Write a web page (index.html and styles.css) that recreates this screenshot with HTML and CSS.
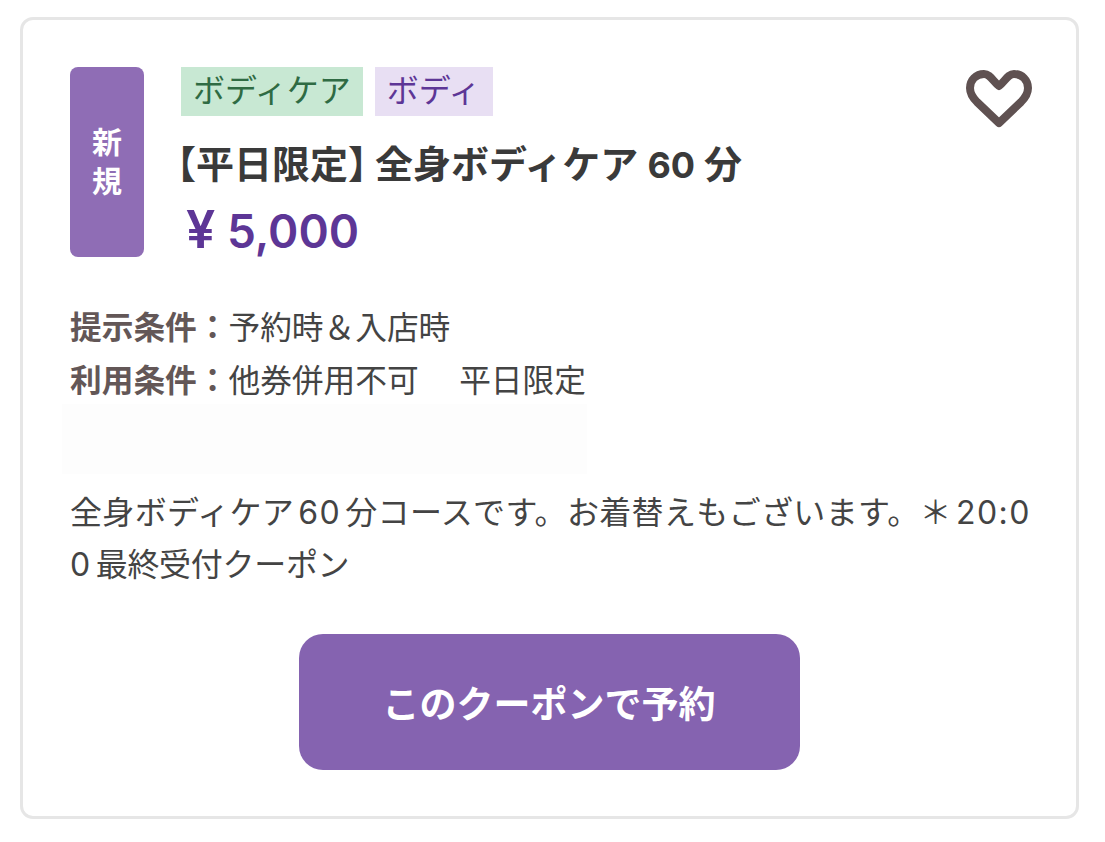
FILE: index.html
```html
<!DOCTYPE html>
<html lang="ja">
<head>
<meta charset="utf-8">
<title>クーポン</title>
<link rel="stylesheet" href="styles.css">
</head>
<body>
<article class="card">
  <header class="head">
    <div class="badge">新<br>規</div>
    <div class="summary">
      <div class="tags">
        <span class="tag tag-green">ボディケア</span>
        <span class="tag tag-purple">ボディ</span>
      </div>
      <h2 class="title">【平日限定<span class="close">】</span>全身ボディケア <span class="title-num">60</span> 分</h2>
      <p class="price"><span class="yen">¥</span> 5,000</p>
    </div>
    <svg class="heart" viewBox="0 0 66 58" aria-label="お気に入り">
      <path d="M33 53 L11 32 C6 27 4 23 4 18 C4 10 10 4 18 4 C24 4 27 11 33 16 C39 11 42 4 48 4 C56 4 62 10 62 18 C62 23 60 27 55 32 Z"/>
    </svg>
  </header>
  <dl class="terms">
    <div class="term"><dt>提示条件：</dt><dd>予約時＆入店時</dd></div>
    <div class="term"><dt>利用条件：</dt><dd>他券併用不可　 平日限定</dd></div>
  </dl>
  <div class="blank"></div>
  <p class="desc">全身ボディケア<span class="num">60</span>分コースです。お着替えもございます。＊<span class="num">20:00</span>最終受付クーポン</p>
  <div class="actions"><a class="button">このクーポンで予約</a></div>
</article>
</body>
</html>
```
FILE: styles.css
```css
* { box-sizing: border-box; }
html, body { margin: 0; padding: 0; background: #fff; }
body {
  width: 1105px;
  height: 842px;
  overflow: hidden;
  padding: 17px 26px 23px 20px;
  font-family: Inter, "Noto Sans CJK JP", sans-serif;
  color: #3d3a3a;
}
.card {
  height: 802px;
  border: 3px solid #e6e6e6;
  border-radius: 13px;
  padding: 47px 44px 0 47px;
  background: #fff;
}
.head { display: flex; align-items: flex-start; }
.badge {
  flex: none;
  width: 74px;
  height: 190px;
  border-radius: 8px;
  background: #8f6db5;
  color: #fff;
  font-size: 30px;
  font-weight: 700;
  line-height: 39px;
  display: flex;
  align-items: center;
  justify-content: center;
  text-align: center;
}
.summary { flex: 1; margin-left: 37px; }
.tags { display: flex; gap: 12px; }
.tag {
  height: 49px;
  padding: 0 12px;
  font-size: 32px;
  line-height: 47px;
}
.tag-green { background: #c8e8d3; color: #2f6b43; }
.tag-purple { background: #e8dff3; color: #5d3696; }
.title {
  margin: 22px 0 0 -23px;
  font-size: 38px;
  line-height: 52px;
  font-weight: 700;
  color: #3a3a3a;
  white-space: nowrap;
}
.close { margin-right: -11px; }
.title-num { font-size: 36px; }
.price {
  margin: 13px 0 0 5px;
  font-size: 46px;
  line-height: 52px;
  font-weight: 600;
  color: #5d3696;
}
.yen { font-size: 52px; line-height: 52px; }
.heart {
  flex: none;
  width: 66px;
  height: 58px;
  margin-top: 3px;
  fill: none;
  stroke: #5f5151;
  stroke-width: 8;
  stroke-linejoin: round;
}
.terms { margin: 44px 0 0; }
.term { display: flex; font-size: 31.7px; line-height: 53px; }
dt { font-weight: 700; color: #635757; }
dd { margin: 0; color: #444; }
.blank {
  width: 525px;
  height: 70px;
  margin: -3px 0 0 -8px;
  background: #fdfdfd;
}
.desc {
  margin: 13px 0 0;
  font-size: 32px;
  line-height: 52px;
  letter-spacing: -0.3px;
  color: #444;
  word-break: break-all;
  text-autospace: no-autospace;
}
.desc::first-line { letter-spacing: 0.35px; }
.num { letter-spacing: 1.5px; margin: 0 4px; }
.actions { display: flex; justify-content: center; margin-top: 43px; padding-right: 4px; }
.button {
  width: 501px;
  height: 136px;
  border-radius: 24px;
  background: #8563b0;
  color: #fff;
  font-size: 37px;
  font-weight: 700;
  display: flex;
  align-items: center;
  justify-content: center;
}
```
